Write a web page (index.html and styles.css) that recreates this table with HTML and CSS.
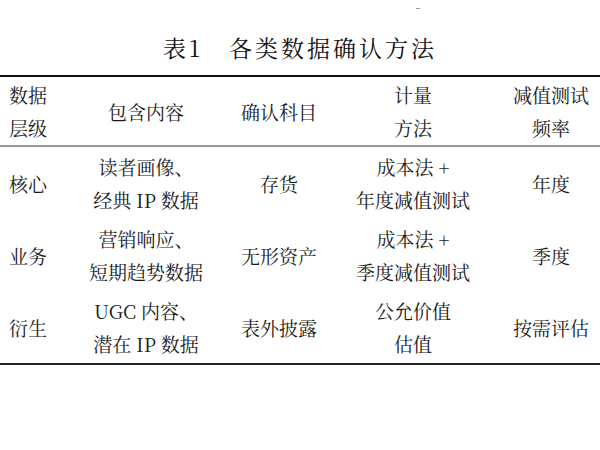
FILE: index.html
```html
<!DOCTYPE html>
<html lang="zh-CN">
<head>
<meta charset="utf-8">
<title>表1 各类数据确认方法</title>
<link rel="stylesheet" href="styles.css">
</head>
<body>
<div class="page">
  <span class="speck"></span>
  <h1 class="caption">表1　各类数据确认方法</h1>
  <table class="data-table">
    <colgroup>
      <col class="c1"><col class="c2"><col class="c3"><col class="c4"><col class="c5">
    </colgroup>
    <thead>
      <tr>
        <th class="first">数据<br>层级</th>
        <th>包含内容</th>
        <th>确认科目</th>
        <th>计量<br>方法</th>
        <th>减值测试<br>频率</th>
      </tr>
    </thead>
    <tbody>
      <tr>
        <td class="first">核心</td>
        <td>读者画像、<br>经典 IP 数据</td>
        <td>存货</td>
        <td>成本法 +<br>年度减值测试</td>
        <td>年度</td>
      </tr>
      <tr>
        <td class="first">业务</td>
        <td>营销响应、<br>短期趋势数据</td>
        <td>无形资产</td>
        <td>成本法 +<br>季度减值测试</td>
        <td>季度</td>
      </tr>
      <tr>
        <td class="first">衍生</td>
        <td>UGC 内容、<br>潜在 IP 数据</td>
        <td>表外披露</td>
        <td>公允价值<br>估值</td>
        <td>按需评估</td>
      </tr>
    </tbody>
  </table>
</div>
</body>
</html>
```

FILE: styles.css
```css
html, body {
  margin: 0;
  padding: 0;
  background: #ffffff;
}

.page {
  position: relative;
  width: 600px;
  height: 450px;
  font-family: "Noto Serif CJK SC", "Liberation Serif", "Noto Sans CJK SC", serif;
  color: #1a1a1a;
}

.speck {
  position: absolute;
  left: 416px;
  top: 8px;
  width: 4px;
  height: 1px;
  background: #9a9a9a;
}

.caption {
  margin: 0;
  padding-top: 33px;
  height: 42px;
  box-sizing: content-box;
  font-size: 23px;
  line-height: 30px;
  font-weight: 400;
  letter-spacing: 3px;
  text-align: center;
  color: #111;
}

.data-table {
  width: 600px;
  border-collapse: collapse;
  table-layout: fixed;
  border-top: 2px solid #111;
  border-bottom: 2px solid #222;
  font-size: 19px;
  line-height: 33px;
}

.c1 { width: 58px; }
.c2 { width: 176px; }
.c3 { width: 90px; }
.c4 { width: 178px; }
.c5 { width: 98px; }

.data-table th,
.data-table td {
  padding: 0;
  text-align: center;
  vertical-align: middle;
  font-weight: normal;
  white-space: nowrap;
}

.data-table thead th {
  height: 68px;
  border-bottom: 2px solid #9a9a9a;
}

.data-table tbody td {
  height: 72px;
}

.data-table .first {
  text-align: left;
  padding-left: 9px;
}
```
